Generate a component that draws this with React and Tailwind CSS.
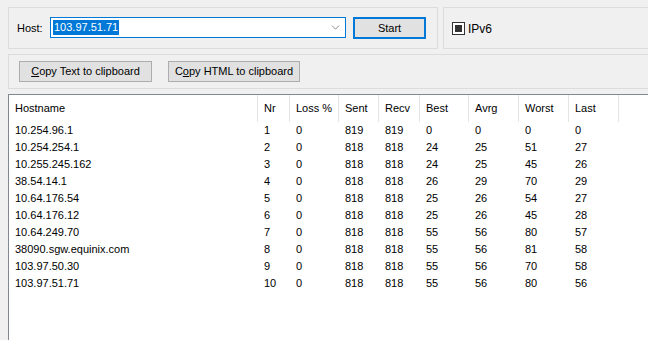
import { ChevronDown } from 'lucide-react';

const cols = [
  { label: 'Hostname', w: 'w-[249px]' },
  { label: 'Nr',       w: 'w-[32px]'  },
  { label: 'Loss %',   w: 'w-[49px]'  },
  { label: 'Sent',     w: 'w-[40px]'  },
  { label: 'Recv',     w: 'w-[41px]'  },
  { label: 'Best',     w: 'w-[49px]'  },
  { label: 'Avrg',     w: 'w-[50px]'  },
  { label: 'Worst',    w: 'w-[50px]'  },
  { label: 'Last',     w: 'w-[50px]'  },
];

const rows = [
  ['10.254.96.1',          1, 0, 819, 819, 0,  0,  0,  0],
  ['10.254.254.1',         2, 0, 818, 818, 24, 25, 51, 27],
  ['10.255.245.162',       3, 0, 818, 818, 24, 25, 45, 26],
  ['38.54.14.1',           4, 0, 818, 818, 26, 29, 70, 29],
  ['10.64.176.54',         5, 0, 818, 818, 25, 26, 54, 27],
  ['10.64.176.12',         6, 0, 818, 818, 25, 26, 45, 28],
  ['10.64.249.70',         7, 0, 818, 818, 55, 56, 80, 57],
  ['38090.sgw.equinix.com', 8, 0, 818, 818, 55, 56, 81, 58],
  ['103.97.50.30',         9, 0, 818, 818, 55, 56, 70, 58],
  ['103.97.51.71',        10, 0, 818, 818, 55, 56, 80, 56],
];

function WinButton({ children, className = '', border = 'border border-[#adadad]' }) {
  return (
    <div className={`shrink-0 h-[21px] flex items-center justify-center bg-[#e1e1e1] ${border} ${className}`}>
      {children}
    </div>
  );
}

export default function App() {
  return (
    <div
      className="w-[648px] h-[340px] bg-[#f0f0f0] overflow-hidden text-[11px] text-black leading-none"
      style={{ fontFamily: '"Liberation Sans", Arial, sans-serif' }}
    >
      {/* Host / Start / IPv6 */}
      <div className="flex gap-[5px] pt-[7px] pl-[8px]">
        <div className="shrink-0 w-[430px] h-[42px] border border-[#dcdcdc] flex items-start pt-[9px] pl-[8px]">
          <span className="mt-[6px] w-[33px]">Host:</span>
          <div className="shrink-0 w-[296px] h-[21px] bg-white border border-[#0078d7] flex items-center pl-[2px] pr-[3px]">
            <span className="bg-[#0078d7] text-white px-[1px] h-[15px] flex items-center">103.97.51.71</span>
            <div className="flex-1" />
            <ChevronDown size={13} strokeWidth={1.2} className="text-[#555]" />
          </div>
          <WinButton className="ml-[7px] w-[73px] h-[22px]" border="border-2 border-[#0078d7]">Start</WinButton>
        </div>
        <div className="shrink-0 w-[220px] h-[42px] border border-[#dcdcdc] flex items-center pl-[8px] pt-[1px]">
          <div className="w-[13px] h-[13px] border border-[#333] bg-white flex items-center justify-center">
            <div className="w-[7px] h-[7px] bg-[#333]" />
          </div>
          <span className="ml-[3px] text-[12px]">IPv6</span>
        </div>
      </div>

      {/* Copy buttons */}
      <div className="pl-[8px] mt-[5px]">
        <div className="w-[660px] h-[35px] border border-[#dcdcdc] flex items-center gap-[16px] pl-[10px]">
          <WinButton className="w-[133px]">
            <span><span className="underline">C</span>opy Text to clipboard</span>
          </WinButton>
          <WinButton className="w-[132px]">
            <span>C<span className="underline">o</span>py HTML to clipboard</span>
          </WinButton>
        </div>
      </div>

      {/* Result list */}
      <div className="ml-[8px] mt-[5px] w-[660px] h-[260px] bg-white border-t border-l border-[#828790]">
        <div className="flex h-[27px]">
          {cols.map((c) => (
            <div key={c.label} className={`${c.w} shrink-0 border-r border-[#e5e5e5] flex items-center pl-[6px]`}>
              {c.label}
            </div>
          ))}
        </div>
        {rows.map((r) => (
          <div key={r[1]} className="flex h-[17px] items-center">
            {r.map((v, i) => (
              <div key={i} className={`${cols[i].w} shrink-0 pl-[6px] pr-[1px]`}>{v}</div>
            ))}
          </div>
        ))}
      </div>
    </div>
  );
}
